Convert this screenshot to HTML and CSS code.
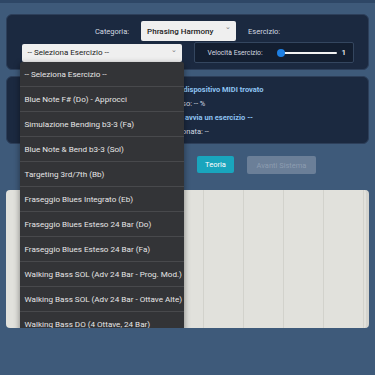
FILE: index.html
```html
<!DOCTYPE html>
<html lang="it">
<head>
    <meta charset="UTF-8">
    <meta name="viewport" content="width=device-width, initial-scale=1.0">
    <title>Blues Trainer</title>
    <link rel="stylesheet" href="styles.css">
</head>
<body>
    <div class="top-strip"></div>
    <div class="app">
        <div class="panel controls">
            <span class="field-label">Categoria:</span>
            <div class="select select-cat">Phrasing Harmony<span class="chev">&#8964;</span></div>
            <span class="field-label">Esercizio:</span>
            <div class="select-wrap">
                <div class="select select-ex">-- Seleziona Esercizio --<span class="chev">&#8964;</span></div>
                <ul class="dropdown">
                    <li>-- Seleziona Esercizio --</li>
                    <li>Blue Note F# (Do) - Approcci</li>
                    <li>Simulazione Bending b3-3 (Fa)</li>
                    <li>Blue Note &amp; Bend b3-3 (Sol)</li>
                    <li>Targeting 3rd/7th (Bb)</li>
                    <li>Fraseggio Blues Integrato (Eb)</li>
                    <li>Fraseggio Blues Esteso 24 Bar (Do)</li>
                    <li>Fraseggio Blues Esteso 24 Bar (Fa)</li>
                    <li>Walking Bass SOL (Adv 24 Bar - Prog. Mod.)</li>
                    <li>Walking Bass SOL (Adv 24 Bar - Ottave Alte)</li>
                    <li>Walking Bass DO (4 Ottave, 24 Bar)</li>
                </ul>
            </div>
            <div class="speed">
                <span class="field-label">Velocità Esercizio:</span>
                <div class="slider"><span class="thumb"></span></div>
                <span class="speed-value">1</span>
            </div>
        </div>

        <div class="panel status">
            <div class="score"></div>
            <div class="info">
                <div class="hl">Nessun dispositivo MIDI trovato</div>
                <div>Progresso: -- %</div>
                <div class="hl">-- Dopo, avvia un esercizio --</div>
                <div>Nota suonata: --</div>
            </div>
        </div>

        <div class="buttons">
            <button class="btn btn-gray">Avvia</button>
            <button class="btn btn-gray">Stop</button>
            <button class="btn btn-teal">Teoria</button>
            <button class="btn btn-disabled">Avanti Sistema</button>
        </div>

        <div class="staff"></div>
    </div>
</body>
</html>
```

FILE: styles.css
```css
body {
    margin: 0;
    background-color: #3e5a7a;
    font-family: Roboto, "Liberation Sans", sans-serif;
    font-size: 8px;
    color: #d3d9e0;
}
.top-strip {
    height: 3px;
    background-color: #2e4766;
}
.app {
    padding: 11px 6px 0;
}
.panel {
    background-color: #1b2940;
    border: 1px solid #2d3f5a;
    border-radius: 6px;
    box-sizing: border-box;
}
.controls {
    display: flex;
    flex-wrap: wrap;
    justify-content: center;
    align-items: center;
    column-gap: 12px;
    row-gap: 1px;
    padding: 6px 8px 6px;
    height: 56px;
}
.field-label {
    color: #d3d9e0;
    font-size: 7.5px;
}
.select {
    position: relative;
    background-color: #efefef;
    color: #222;
    border-radius: 2px;
    box-sizing: border-box;
    padding-left: 6px;
    display: flex;
    align-items: center;
    font-size: 8px;
}
.select-cat {
    width: 95px;
    height: 20px;
    font-weight: 500;
}
.select-ex {
    width: 160px;
    height: 18px;
}
.chev {
    position: absolute;
    right: 5px;
    top: 2px;
    font-size: 7px;
    color: #777;
}
.select-wrap {
    position: relative;
}
.dropdown {
    position: absolute;
    left: -2px;
    top: 100%;
    width: 164px;
    margin: 0;
    padding: 0;
    list-style: none;
    background-color: #333437;
    box-shadow: 0 2px 6px rgba(0,0,0,0.45);
    border-radius: 2px;
    z-index: 10;
}
.dropdown li {
    height: 25px;
    box-sizing: border-box;
    padding-left: 5px;
    display: flex;
    align-items: center;
    border-bottom: 1px solid #48494c;
    color: #e6e6e6;
    font-size: 8.1px;
    white-space: nowrap;
}
.dropdown li:last-child {
    border-bottom: none;
}
.speed {
    width: 160px;
    height: 21px;
    box-sizing: border-box;
    border: 1px solid #34465f;
    border-radius: 2px;
    background-color: #131e30;
    display: flex;
    align-items: center;
    padding-left: 13px;
}
.speed .field-label {
    font-size: 6.8px;
}
.slider {
    position: relative;
    width: 59px;
    height: 2px;
    background-color: #f2f2f2;
    border-radius: 1px;
    margin-left: 15px;
}
.thumb {
    position: absolute;
    left: -1px;
    top: -3px;
    width: 8px;
    height: 8px;
    border-radius: 50%;
    background-color: #1d7fe3;
}
.speed-value {
    margin-left: 5px;
    color: #f0f0f0;
    font-weight: 500;
}
.status {
    margin-top: 6px;
    height: 68px;
    display: flex;
    padding: 6px 8px 4px;
    line-height: 14px;
    font-size: 7.5px;
}
.score {
    width: 141px;
}
.info .hl {
    color: #8ec4f2;
    font-weight: bold;
}
.buttons {
    display: flex;
    justify-content: center;
    gap: 13px;
    margin-top: 12px;
}
.btn {
    height: 17px;
    border: none;
    border-radius: 2px;
    font-family: Roboto, "Liberation Sans", sans-serif;
    font-size: 7.5px;
    padding: 0;
}
.btn-gray {
    width: 56px;
    background-color: #5b6f88;
    color: #e5e9ee;
}
.btn-teal {
    width: 37px;
    background-color: #19a5bd;
    color: #ffffff;
}
.btn-disabled {
    width: 69px;
    height: 18px;
    background-color: #6b7f98;
    color: #8c9cb0;
}
.staff {
    margin-top: 16px;
    height: 138px;
    border-radius: 4px;
    background-color: #e1e1dc;
    background-image: repeating-linear-gradient(to right, transparent 0 37px, #d2d2cc 37px 38px, transparent 38px 40px);
    border-right: 3px solid #d4d4cf;
    box-sizing: border-box;
}
```
